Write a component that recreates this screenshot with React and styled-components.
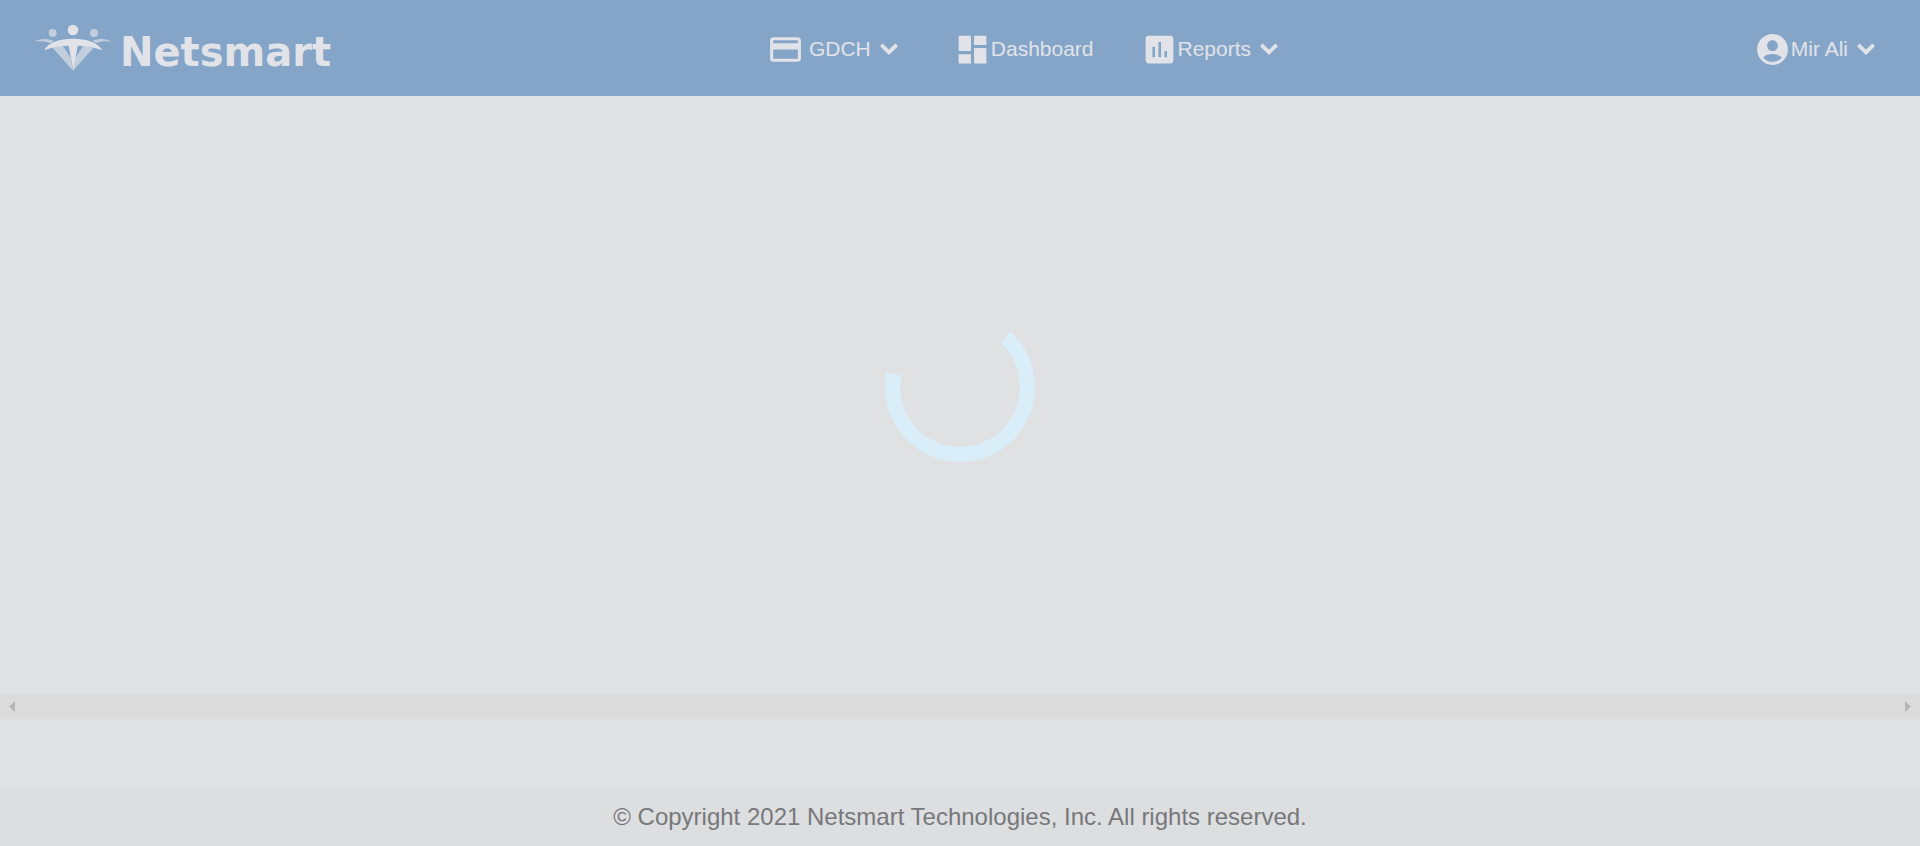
import React from 'react';
import styled, { createGlobalStyle } from 'styled-components';
import { MdCreditCard, MdDashboard, MdAccountCircle } from 'react-icons/md';

const GlobalStyle = createGlobalStyle`
  *, *::before, *::after { box-sizing: border-box; }
  body {
    margin: 0;
    background: #e0e1e3;
    font-family: "Liberation Sans", Arial, sans-serif;
  }
`;

const Page = styled.div`
  display: flex;
  flex-direction: column;
  min-height: 100vh;
`;

const Header = styled.header`
  display: grid;
  grid-template-columns: 1fr auto 1fr;
  align-items: center;
  height: 96px;
  padding: 0 36px 0 34px;
  background: #85a5c8;
  color: #e1e3e8;
`;

const Brand = styled.a`
  display: flex;
  align-items: center;
  gap: 8px;
  color: inherit;
  text-decoration: none;
`;

const BrandMark = styled.svg`
  width: 78px;
  height: 48px;
  flex: none;
`;

const BrandName = styled.span`
  padding-top: 8px;
  font: bold 40px/48px "DejaVu Sans", Verdana, sans-serif;
`;

const Nav = styled.nav`
  display: flex;
  gap: 47px;
  padding: 2px 0 0 136px;
`;

const UserArea = styled.div`
  display: flex;
  justify-content: flex-end;
  padding-top: 2px;
`;

const NavItem = styled.button`
  display: flex;
  align-items: center;
  gap: ${({ $gap = 0 }) => $gap}px;
  padding: 0;
  border: 0;
  background: none;
  color: inherit;
  font: inherit;
  font-size: 21px;
  line-height: 24px;
  text-decoration: none;
  white-space: nowrap;
  cursor: pointer;

  svg { flex: none; }
`;

const Label = styled.span`
  display: flex;
  align-items: center;
`;

const Main = styled.main`
  flex: 1;
  display: flex;
  align-items: center;
  justify-content: center;
  padding-bottom: 16px;
`;

const Spinner = styled.svg`
  width: 150px;
  height: 150px;
`;

const ScrollTrack = styled.div`
  display: flex;
  align-items: center;
  justify-content: space-between;
  height: 25px;
  margin-bottom: 69px;
  padding: 0 9px;
  background: #dcdcdd;
`;

const ScrollArrow = styled.button`
  display: flex;
  padding: 0;
  border: 0;
  background: none;
  color: #b5b6b8;
`;

const Footer = styled.footer`
  height: 58px;
  background: #dddee0;
  color: #77787b;
  font-size: 24px;
  line-height: 58px;
  text-align: center;
`;

const ICON_SIZE = 37;

function Logo() {
  return (
    <BrandMark viewBox="42 41 234 144" aria-hidden="true">
      <g fill="#c2cedd">
        <circle cx="98" cy="68" r="12" />
        <circle cx="222" cy="68" r="12" />
        <path d="M43 94C58 84 82 84 102 92L92 99C76 93 60 92 43 94Z" />
        <path d="M275 94C260 84 238 84 218 92L228 99C242 93 258 92 275 94Z" />
        <path d="M94 108L124 100L152 142L159 181Z" />
        <path d="M225 108L194 100L166 142L159 181Z" />
      </g>
      <g fill="#e1e3e8">
        <circle cx="159" cy="59" r="16" />
        <path d="M73 120C92 74 226 74 246 120C222 109 198 106 173 106L160 181L146 106C120 106 96 109 73 120Z" />
      </g>
    </BrandMark>
  );
}

const Chevron = () => (
  <svg width="36" height="36" viewBox="0 0 24 24" aria-hidden="true">
    <path d="M6.9 9.2L12 14.3L17.1 9.2" fill="none" stroke="currentColor" strokeWidth="2.5" />
  </svg>
);

const ChartIcon = () => (
  <svg width={ICON_SIZE} height={ICON_SIZE} viewBox="0 0 24 24" aria-hidden="true">
    <path
      fill="currentColor"
      fillRule="evenodd"
      d="M5 3H19A2 2 0 0 1 21 5V19A2 2 0 0 1 19 21H5A2 2 0 0 1 3 19V5A2 2 0 0 1 5 3ZM7.4 10.2V17H9.1V10.2ZM11.3 7.2V17H13V7.2ZM15.2 13.2V17H16.9V13.2Z"
    />
  </svg>
);

const Arrow = ({ d }) => (
  <svg width="6" height="11" viewBox="0 0 6 11" aria-hidden="true">
    <path d={d} fill="currentColor" />
  </svg>
);

export default function App() {
  return (
    <>
      <GlobalStyle />
      <Page>
        <Header>
          <Brand href="#">
            <Logo />
            <BrandName>Netsmart</BrandName>
          </Brand>
          <Nav>
            <NavItem type="button" $gap={5}>
              <MdCreditCard size={ICON_SIZE} />
              <Label>GDCH<Chevron /></Label>
            </NavItem>
            <NavItem as="a" href="#dashboard">
              <MdDashboard size={ICON_SIZE} />
              <Label>Dashboard</Label>
            </NavItem>
            <NavItem type="button">
              <ChartIcon />
              <Label>Reports<Chevron /></Label>
            </NavItem>
          </Nav>
          <UserArea>
            <NavItem type="button">
              <MdAccountCircle size={ICON_SIZE} />
              <Label>Mir Ali<Chevron /></Label>
            </NavItem>
          </UserArea>
        </Header>
        <Main>
          <Spinner viewBox="0 0 150 150" role="img" aria-label="Loading">
            <path
              d="M120.6 25.2A67.5 67.5 0 1 1 8.7 62.1"
              fill="none"
              stroke="#d9eef9"
              strokeWidth="15"
            />
          </Spinner>
        </Main>
        <ScrollTrack>
          <ScrollArrow type="button" aria-label="Scroll left"><Arrow d="M6 0V11L0 5.5Z" /></ScrollArrow>
          <ScrollArrow type="button" aria-label="Scroll right"><Arrow d="M0 0V11L6 5.5Z" /></ScrollArrow>
        </ScrollTrack>
        <Footer>© Copyright 2021 Netsmart Technologies, Inc. All rights reserved.</Footer>
      </Page>
    </>
  );
}
